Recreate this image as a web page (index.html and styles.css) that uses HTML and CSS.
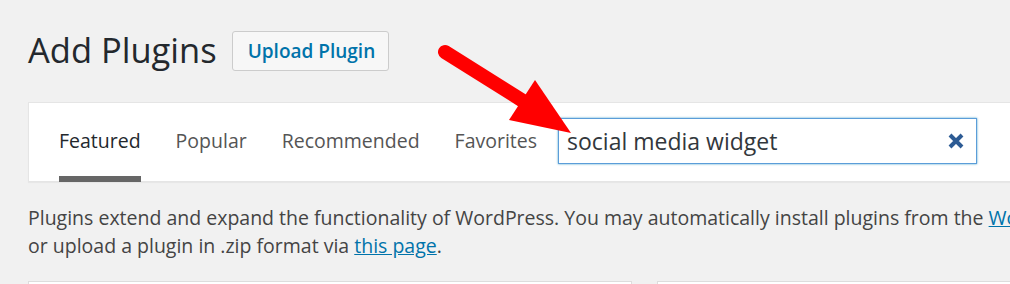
FILE: index.html
```html
<!DOCTYPE html>
<html lang="en">
<head>
    <meta charset="UTF-8">
    <title>Add Plugins</title>
    <link rel="stylesheet" href="styles.css">
</head>
<body>
    <div class="wrap">
        <!-- Заголовок -->
        <div class="page-head">
            <h1 class="page-title">Add Plugins</h1>
            <a class="upload-btn" href="#">Upload Plugin</a>
        </div>

        <!-- Вкладки и поиск -->
        <div class="filter-bar">
            <ul class="tabs">
                <li><a class="tab current" href="#">Featured</a></li>
                <li><a class="tab" href="#">Popular</a></li>
                <li><a class="tab" href="#">Recommended</a></li>
                <li><a class="tab" href="#">Favorites</a></li>
            </ul>
            <div class="search-box">
                <input class="search-input" type="text" value="social media widget">
                <span class="search-clear">
                    <svg width="18" height="16" viewBox="0 0 18 16">
                        <path d="M3 2 L15 14 M15 2 L3 14" stroke="#2d5b94" stroke-width="4" stroke-linecap="butt" fill="none"/>
                    </svg>
                </span>
            </div>
        </div>

        <p class="intro">
            Plugins extend and expand the functionality of WordPress. You may automatically install plugins from the <a href="#">WordPress Plugin Directory</a><br>
            or upload a plugin in .zip format via <a href="#">this page</a>.
        </p>

        <div class="cards">
            <div class="card"></div>
            <div class="card"></div>
        </div>
    </div>

    <!-- Красная стрелка поверх страницы -->
    <svg class="arrow" width="1010" height="284" viewBox="0 0 1010 284">
        <line x1="445" y1="52" x2="523" y2="101" stroke="#ff0000" stroke-width="14" stroke-linecap="round"/>
        <polygon points="535,80 509,120 571,133" fill="#ff0000"/>
    </svg>
</body>
</html>
```

FILE: styles.css
```css
* {
    margin: 0;
    padding: 0;
    box-sizing: border-box;
}

body {
    font-family: "Open Sans", sans-serif;
    background: #f1f1f1;
    color: #444;
    width: 1010px;
    height: 284px;
    overflow: hidden;
    position: relative;
}

.wrap {
    width: 1300px;
    padding: 31px 0 0 28px;
}

.page-head {
    display: flex;
    align-items: center;
    height: 40px;
}

.page-title {
    font-size: 34.5px;
    font-weight: 400;
    color: #23282d;
    line-height: 40px;
    margin-top: -3px;
}

.upload-btn {
    margin-left: 15px;
    height: 40px;
    padding: 0 13px 0 15px;
    display: flex;
    align-items: center;
    border: 1px solid #ccc;
    border-radius: 3px;
    background: #f7f7f7;
    color: #0073aa;
    font-size: 19px;
    font-weight: 600;
    text-decoration: none;
}

/* Панель вкладок */
.filter-bar {
    margin-top: 31px;
    height: 80px;
    background: #fff;
    border: 1px solid #e5e5e5;
    box-shadow: 0 1px 1px rgba(0,0,0,0.04);
    display: flex;
    align-items: flex-start;
    padding-left: 30px;
}

.tabs {
    list-style: none;
    display: flex;
    gap: 35px;
    height: 79px;
}

.tab {
    display: block;
    height: 79px;
    padding-top: 24px;
    font-size: 19.5px;
    color: #555;
    text-decoration: none;
    border-bottom: 6px solid transparent;
}

.tab.current {
    color: #23282d;
    border-bottom-color: #666;
}

.search-box {
    position: relative;
    margin: 15px 0 0 21px;
}

.search-input {
    width: 419px;
    height: 46px;
    border: 1px solid #5b9dd9;
    box-shadow: 0 0 2px rgba(30,140,190,0.8);
    font-family: "Open Sans", sans-serif;
    font-size: 23px;
    color: #32373c;
    padding: 0 8px;
    outline: none;
}

.search-clear {
    position: absolute;
    left: 389px;
    top: 15px;
    display: block;
    line-height: 0;
}

/* Описание */
.intro {
    margin-top: 22px;
    font-size: 19.5px;
    line-height: 28px;
    color: #444;
    white-space: nowrap;
}

.intro a {
    color: #0073aa;
}

.cards {
    display: flex;
    gap: 25px;
    margin-top: 21px;
}

.card {
    flex-shrink: 0;
    width: 604px;
    height: 60px;
    background: #fff;
    border: 1px solid #ddd;
}

.arrow {
    position: absolute;
    left: 0;
    top: 0;
    pointer-events: none;
}
```
